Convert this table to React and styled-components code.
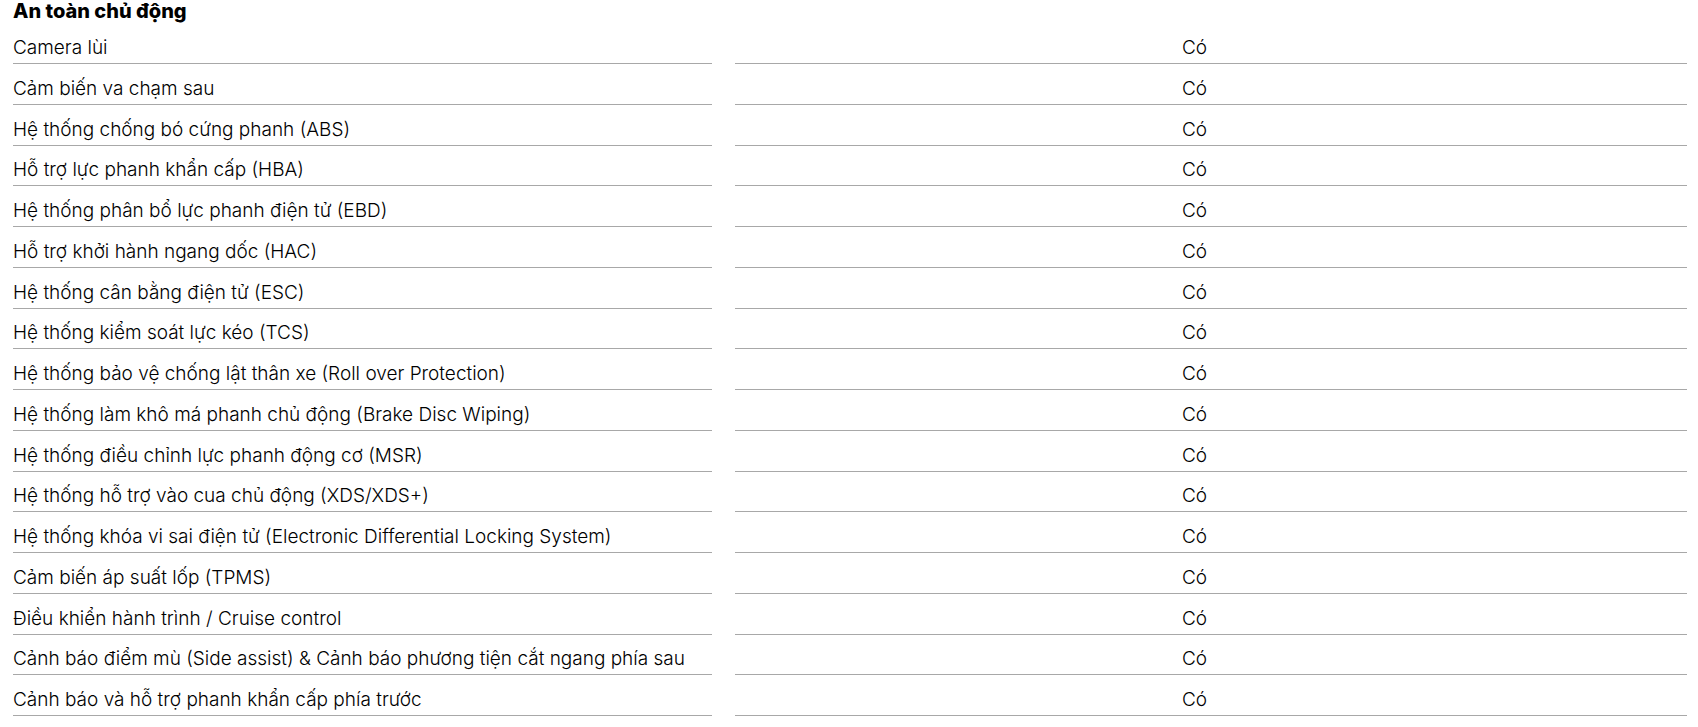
import React from "react";
import styled, { createGlobalStyle } from "styled-components";

const features = [
  "Camera lùi",
  "Cảm biến va chạm sau",
  "Hệ thống chống bó cứng phanh (ABS)",
  "Hỗ trợ lực phanh khẩn cấp (HBA)",
  "Hệ thống phân bổ lực phanh điện tử (EBD)",
  "Hỗ trợ khởi hành ngang dốc (HAC)",
  "Hệ thống cân bằng điện tử (ESC)",
  "Hệ thống kiểm soát lực kéo (TCS)",
  "Hệ thống bảo vệ chống lật thân xe (Roll over Protection)",
  "Hệ thống làm khô má phanh chủ động (Brake Disc Wiping)",
  "Hệ thống điều chỉnh lực phanh động cơ (MSR)",
  "Hệ thống hỗ trợ vào cua chủ động (XDS/XDS+)",
  "Hệ thống khóa vi sai điện tử (Electronic Differential Locking System)",
  "Cảm biến áp suất lốp (TPMS)",
  "Điều khiển hành trình / Cruise control",
  "Cảnh báo điểm mù (Side assist) & Cảnh báo phương tiện cắt ngang phía sau",
  "Cảnh báo và hỗ trợ phanh khẩn cấp phía trước",
];

const App = () => {
  return (
    <>
      <GlobalStyle />
      <Section>
        <Title>An toàn chủ động</Title>
        <Table>
          {features.map((name) => (
            <Row key={name}>
              <Cell>{name}</Cell>
              <Cell $value>Có</Cell>
            </Row>
          ))}
        </Table>
      </Section>
    </>
  );
};

export default App;

const GlobalStyle = createGlobalStyle`
  body {
    margin: 0;
    background: #ffffff;
    font-family: "Inter", "Noto Sans", sans-serif;
    color: #000000;
  }
`;

const Section = styled.section`
  padding: 0 11px 0 13px;
`;

const Title = styled.h2`
  margin: 0;
  height: 23.25px;
  font-size: 20px;
  line-height: 23.25px;
  font-weight: 800;
  color: #000000;
`;

const Table = styled.div`
  display: flex;
  flex-direction: column;
`;

const Row = styled.div`
  display: grid;
  grid-template-columns: 699px 1fr;
  column-gap: 23px;
  height: 40.75px;
`;

const Cell = styled.div`
  display: flex;
  align-items: flex-end;
  padding-bottom: 3px;
  padding-left: ${(p) => (p.$value ? "447px" : "0")};
  border-bottom: 1px solid #a8a8a8;
  font-size: 19px;
  line-height: 24px;
  font-weight: 300;
  white-space: nowrap;
`;
